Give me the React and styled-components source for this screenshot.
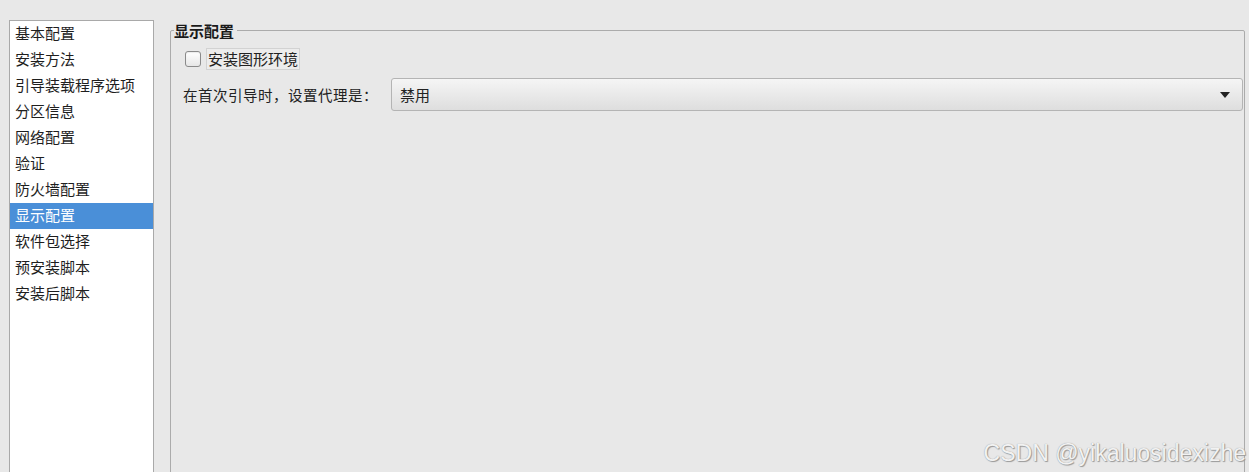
import React from 'react';
import styled, { createGlobalStyle } from 'styled-components';

const GlobalStyle = createGlobalStyle`
  html, body {
    margin: 0;
    padding: 0;
    background: #e8e8e8;
    overflow: hidden;
  }
  body {
    font-family: "Noto Sans CJK SC", "Noto Sans", "DejaVu Sans", sans-serif;
    color: #1e1e1e;
  }
`;

const Page = styled.div`
  position: relative;
  display: flex;
  align-items: flex-start;
  gap: 16px;
  height: 472px;
  padding: 20px 0 0 9px;
  box-sizing: border-box;
  overflow: hidden;
`;

const SideList = styled.ul`
  list-style: none;
  margin: 0;
  padding: 0;
  width: 143px;
  height: 480px;
  flex: none;
  background: #fff;
  border: 1px solid #a9a9a9;
`;

const SideItem = styled.li`
  height: 26px;
  line-height: 24px;
  padding-left: 5px;
  font-size: 15px;
  white-space: nowrap;
  background: ${p => (p.$active ? '#4a8fd8' : 'transparent')};
  color: ${p => (p.$active ? '#fff' : '#1e1e1e')};
`;

const Group = styled.fieldset`
  flex: 1;
  margin: 2px 4px 0 0;
  padding: 9px 1px 0 12px;
  height: 480px;
  border: 1px solid #ababab;
  border-radius: 2px;
  min-width: 0;
`;

const Legend = styled.legend`
  margin-left: -9px;
  padding: 0 3px 0 0;
  font-size: 15px;
  font-weight: 700;
  line-height: 17px;
  color: #1a1a1a;
`;

const CheckRow = styled.label`
  display: flex;
  align-items: center;
  gap: 5px;
  margin-left: 2px;
  height: 22px;
`;

const Box = styled.span`
  width: 14px;
  height: 14px;
  border: 1px solid #8a8a8a;
  border-radius: 3px;
  background: linear-gradient(#ffffff, #e6e6e6);
  box-shadow: inset 0 1px 1px rgba(0, 0, 0, 0.08);
`;

const CheckText = styled.span`
  font-size: 15px;
  line-height: 20px;
  padding: 0 1px 0 1px;
  border: 1px solid #d2d2d2;
  background: #ececec;
  color: #222;
`;

const FieldRow = styled.div`
  display: flex;
  align-items: center;
  gap: 13px;
  margin-top: 8px;
`;

const FieldLabel = styled.span`
  font-size: 14.5px;
  letter-spacing: 0.5px;
  white-space: nowrap;
  color: #222;
`;

const Combo = styled.div`
  flex: 1;
  display: flex;
  align-items: center;
  justify-content: space-between;
  box-sizing: border-box;
  height: 33px;
  padding: 0 12px 0 8px;
  border: 1px solid #b4b4b4;
  border-radius: 3px;
  background: linear-gradient(#f5f5f5, #dedede);
  font-size: 15px;
  color: #222;
`;

const Watermark = styled.div`
  position: absolute;
  right: 3px;
  bottom: 5px;
  font-family: "Liberation Sans", Arial, sans-serif;
  font-size: 23px;
  color: #f2f2f2;
  text-shadow: 0 0 1px #8c8c8c, 1px 1px 1px #9a9a9a;
  white-space: nowrap;
`;

const items = [
  '基本配置',
  '安装方法',
  '引导装载程序选项',
  '分区信息',
  '网络配置',
  '验证',
  '防火墙配置',
  '显示配置',
  '软件包选择',
  '预安装脚本',
  '安装后脚本',
];

const Arrow = () => (
  <svg width="10" height="6" viewBox="0 0 10 6">
    <path d="M0 0 L10 0 L5 6 Z" fill="#222" />
  </svg>
);

export default function App() {
  return (
    <>
      <GlobalStyle />
      <Page>
        <SideList>
          {items.map(name => (
            <SideItem key={name} $active={name === '显示配置'}>
              {name}
            </SideItem>
          ))}
        </SideList>
        <Group>
          <Legend>显示配置</Legend>
          <CheckRow>
            <Box />
            <CheckText>安装图形环境</CheckText>
          </CheckRow>
          <FieldRow>
            <FieldLabel>在首次引导时，设置代理是：</FieldLabel>
            <Combo>
              <span>禁用</span>
              <Arrow />
            </Combo>
          </FieldRow>
        </Group>
        <Watermark>CSDN @yikaluosidexizhe</Watermark>
      </Page>
    </>
  );
}
